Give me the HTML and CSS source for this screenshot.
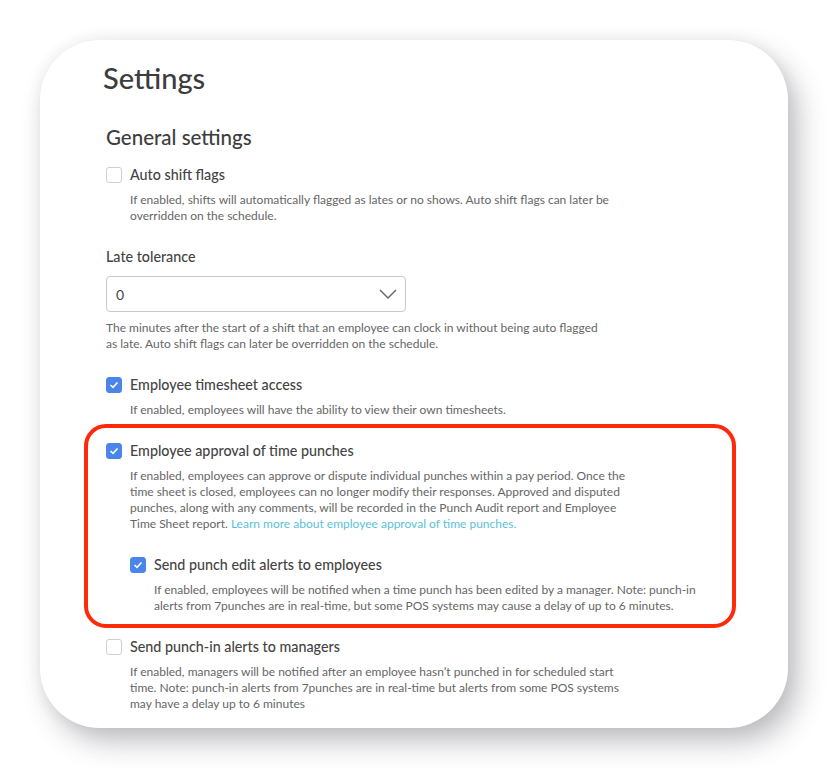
FILE: index.html
```html
<!DOCTYPE html>
<html lang="en">
  <head>
    <meta charset="UTF-8" />
    <meta name="viewport" content="width=device-width, initial-scale=1.0" />
    <title>Settings</title>
    <link rel="stylesheet" href="styles.css">
  </head>
  <body>
    <div class="card">
      <h1>Settings</h1>

      <div class="section">
        <h2>General settings</h2>

        <div class="setting">
          <label class="check-row">
            <span class="box"></span>
            <span class="check-label">Auto shift flags</span>
          </label>
          <p class="desc">If enabled, shifts will automatically flagged as lates or no shows. Auto shift flags can later be<br>overridden on the schedule.</p>
        </div>

        <div class="setting">
          <div class="field-label">Late tolerance</div>
          <div class="select">
            <span>0</span>
            <svg width="18" height="10" viewBox="0 0 18 10"><path d="M1 1 L9 9 L17 1" fill="none" stroke="#6b6b6b" stroke-width="1.5"/></svg>
          </div>
          <p class="desc flush">The minutes after the start of a shift that an employee can clock in without being auto flagged<br>as late. Auto shift flags can later be overridden on the schedule.</p>
        </div>

        <div class="setting">
          <label class="check-row">
            <span class="box checked"><svg width="10" height="8" viewBox="0 0 10 8"><path d="M1.5 4 L4 6.3 L8.5 1.5" fill="none" stroke="#fff" stroke-width="1.6"/></svg></span>
            <span class="check-label">Employee timesheet access</span>
          </label>
          <p class="desc">If enabled, employees will have the ability to view their own timesheets.</p>
        </div>

        <div class="highlight">
          <div class="setting">
            <label class="check-row">
              <span class="box checked"><svg width="10" height="8" viewBox="0 0 10 8"><path d="M1.5 4 L4 6.3 L8.5 1.5" fill="none" stroke="#fff" stroke-width="1.6"/></svg></span>
              <span class="check-label">Employee approval of time punches</span>
            </label>
            <p class="desc">If enabled, employees can approve or dispute individual punches within a pay period. Once the<br>time sheet is closed, employees can no longer modify their responses. Approved and disputed<br>punches, along with any comments, will be recorded in the Punch Audit report and Employee<br>Time Sheet report. <a href="#">Learn more about employee approval of time punches.</a></p>
          </div>

          <div class="setting nested">
            <label class="check-row">
              <span class="box checked"><svg width="10" height="8" viewBox="0 0 10 8"><path d="M1.5 4 L4 6.3 L8.5 1.5" fill="none" stroke="#fff" stroke-width="1.6"/></svg></span>
              <span class="check-label">Send punch edit alerts to employees</span>
            </label>
            <p class="desc">If enabled, employees will be notified when a time punch has been edited by a manager. Note: punch-in<br>alerts from 7punches are in real-time, but some POS systems may cause a delay of up to 6 minutes.</p>
          </div>
        </div>

        <div class="setting after">
          <label class="check-row">
            <span class="box"></span>
            <span class="check-label">Send punch-in alerts to managers</span>
          </label>
          <p class="desc">If enabled, managers will be notified after an employee hasn’t punched in for scheduled start<br>time. Note: punch-in alerts from 7punches are in real-time but alerts from some POS systems<br>may have a delay up to 6 minutes</p>
        </div>
      </div>
    </div>
  </body>
</html>
```

FILE: styles.css
```css
body {
  font-family: Lato, "Liberation Sans", sans-serif;
  margin: 0;
  padding: 40px;
  background: #fff;
  color: #444;
}
.card {
  width: 748px;
  height: 688px;
  box-sizing: border-box;
  background: #fff;
  border-radius: 60px;
  padding: 22px 0 0 63px;
  box-shadow: 10px 14px 28px rgba(60, 60, 70, 0.32), 0 0 16px rgba(0, 0, 0, 0.06);
  overflow: hidden;
}
h1 {
  margin: 0;
  font-size: 29px;
  font-weight: 500;
  line-height: 32px;
  color: #3d3d3d;
}
.section {
  padding-left: 3px;
  margin-top: 31px;
}
h2 {
  margin: 0;
  font-size: 20.5px;
  font-weight: 500;
  line-height: 24px;
  color: #3d3d3d;
}
.setting {
  margin-top: 23px;
}
.section h2 + .setting {
  margin-top: 16px;
}
.check-row {
  display: flex;
  align-items: center;
  gap: 8px;
  height: 20px;
}
.box {
  width: 16px;
  height: 16px;
  box-sizing: border-box;
  border: 1px solid #cfcfcf;
  border-radius: 3px;
  display: flex;
  align-items: center;
  justify-content: center;
}
.box.checked {
  background: #4a86e8;
  border-color: #4a86e8;
}
.check-label,
.field-label {
  font-size: 14.3px;
  font-weight: 500;
  color: #444;
  line-height: 20px;
}
.desc {
  margin: 7px 0 0 24px;
  font-size: 12px;
  line-height: 16px;
  color: #666;
}
.desc.flush {
  margin: 8px 0 0 0;
}
.desc a {
  color: #5bbfdc;
  text-decoration: none;
}
.select {
  margin-top: 9px;
  width: 300px;
  height: 36px;
  box-sizing: border-box;
  border: 1px solid #c8c8c8;
  border-radius: 4px;
  display: flex;
  align-items: center;
  justify-content: space-between;
  padding: 0 8px 0 9px;
  font-size: 14px;
  color: #444;
}
.highlight {
  margin: 6px 0 0 -22px;
  width: 652px;
  box-sizing: border-box;
  border: 4px solid #ff2a0a;
  border-radius: 22px;
  padding: 13px 0 10px 18px;
}
.highlight .setting:first-child {
  margin-top: 0;
}
.nested {
  margin-left: 24px;
}
.after {
  margin-top: 9px;
}
```
